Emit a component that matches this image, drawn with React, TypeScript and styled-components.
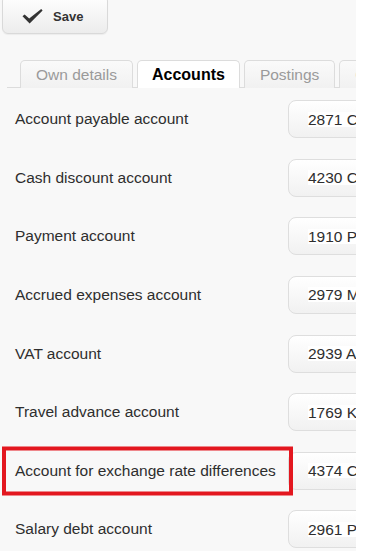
import React from 'react';
import styled, { createGlobalStyle } from 'styled-components';

const GlobalStyle = createGlobalStyle`
  html, body {
    margin: 0;
    padding: 0;
    background: #fff;
  }
  body {
    font-family: "Liberation Sans", Arial, sans-serif;
  }
`;

const Panel = styled.div`
  width: 356px;
  min-height: 551px;
  background: #f8f8f8;
  overflow: hidden;
`;

const Toolbar = styled.div`
  display: flex;
  padding-left: 2px;
`;

const SaveButton = styled.button`
  display: flex;
  align-items: center;
  gap: 10px;
  width: 106px;
  height: 39px;
  margin-top: -5px;
  padding: 4px 0 0 19px;
  border: 1px solid #d9d9d9;
  border-radius: 6px;
  background: linear-gradient(#ffffff, #ececec);
  box-shadow: 0 1px 1px rgba(0, 0, 0, 0.05);
  font-family: "Liberation Sans", Arial, sans-serif;
  font-size: 13px;
  font-weight: bold;
  color: #333;
  cursor: pointer;
`;

const TabBar = styled.div`
  display: flex;
  gap: 4px;
  margin: 26px 0 0 7px;
  padding-left: 13px;
  border-bottom: 1px solid #dcdcdc;
`;

const Tab = styled.div<{ $active?: boolean }>`
  flex-shrink: 0;
  height: 27px;
  line-height: 28px;
  margin-bottom: -1px;
  padding: 0 ${(p) => (p.$active ? '14px' : '15px')};
  border: 1px solid #dcdcdc;
  border-bottom: none;
  border-radius: 5px 5px 0 0;
  background: ${(p) => (p.$active ? '#fff' : 'linear-gradient(#fafafa, #f1f1f1)')};
  color: ${(p) => (p.$active ? '#000' : '#9a9a9a')};
  font-size: ${(p) => (p.$active ? '16px' : '15.5px')};
  font-weight: ${(p) => (p.$active ? 'bold' : 'normal')};
  white-space: nowrap;
`;

const Rows = styled.div`
  margin-top: 2px;
`;

const Row = styled.div`
  display: grid;
  grid-template-columns: 273px 200px;
  align-items: center;
  height: 58.57px;
  padding-left: 15px;
`;

const Label = styled.div<{ $marked?: boolean }>`
  position: relative;
  font-size: 15.5px;
  color: #2e2e2e;
  white-space: nowrap;

  ${(p) =>
    p.$marked &&
    `
    &::after {
      content: '';
      position: absolute;
      left: -13px;
      right: -5px;
      top: 50%;
      height: 49px;
      transform: translateY(-50%);
      border: 4px solid #e3171f;
      box-sizing: border-box;
    }
  `}
`;

const Field = styled.div`
  display: flex;
  align-items: center;
  height: 38px;
  padding-left: 19px;
  border: 1px solid #dedede;
  border-radius: 8px;
  background: linear-gradient(#ffffff, #f1f1f1);
  box-sizing: border-box;
`;

const Value = styled.span`
  background: #fff;
  color: #2e2e2e;
  font-size: 15.5px;
  line-height: 15px;
  white-space: nowrap;
`;

const CheckIcon = () => (
  <svg width="21" height="15" viewBox="0 0 21 15">
    <path
      d="M0.5 7.2 L2.6 5.4 L7.2 9.6 L19.2 0 L20.6 1.4 L7.6 14.6 Z"
      fill="#333"
    />
  </svg>
);

const accounts = [
  { label: 'Account payable account', value: '2871 Creditors' },
  { label: 'Cash discount account', value: '4230 Cash discount' },
  { label: 'Payment account', value: '1910 Payments' },
  { label: 'Accrued expenses account', value: '2979 Miscellaneous' },
  { label: 'VAT account', value: '2939 Accounted VAT' },
  { label: 'Travel advance account', value: '1769 Kilometre advance' },
  { label: 'Account for exchange rate differences', value: '4374 Currency', marked: true },
  { label: 'Salary debt account', value: '2961 Payroll' },
];

const tabs = ['Own details', 'Accounts', 'Postings', 'Contacts'];

const App: React.FC = () => (
  <>
    <GlobalStyle />
    <Panel>
      <Toolbar>
        <SaveButton>
          <CheckIcon />
          Save
        </SaveButton>
      </Toolbar>
      <TabBar>
        {tabs.map((tab) => (
          <Tab key={tab} $active={tab === 'Accounts'}>
            {tab}
          </Tab>
        ))}
      </TabBar>
      <Rows>
        {accounts.map((item) => (
          <Row key={item.label}>
            <Label $marked={item.marked}>{item.label}</Label>
            <Field>
              <Value>{item.value}</Value>
            </Field>
          </Row>
        ))}
      </Rows>
    </Panel>
  </>
);

export default App;
